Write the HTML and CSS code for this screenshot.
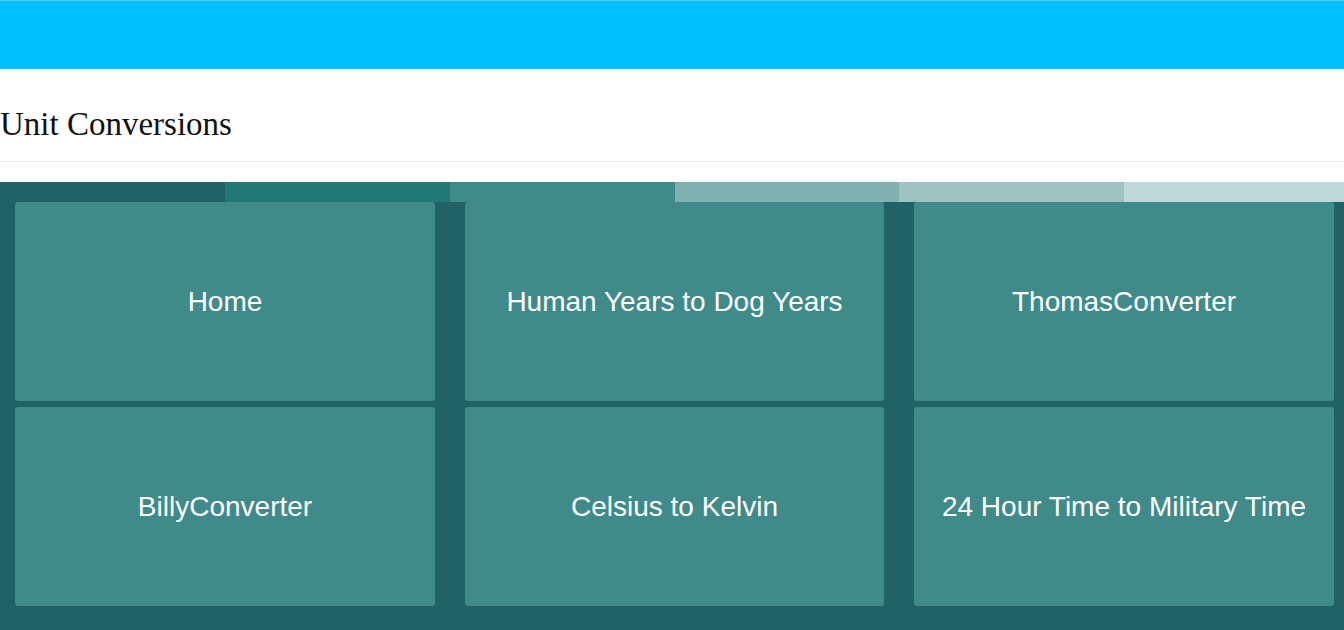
FILE: index.html
```html
<!DOCTYPE html>
<html lang="en">
<head>
<meta charset="utf-8">
<title>Unit Conversions</title>
<link rel="stylesheet" href="styles.css">
</head>
<body>
<div class="topbar"></div>
<header class="page-header">
  <h1 class="title">Unit Conversions</h1>
</header>
<main class="board">
  <div class="stripes">
    <span class="stripe s1"></span>
    <span class="stripe s2"></span>
    <span class="stripe s3"></span>
    <span class="stripe s4"></span>
    <span class="stripe s5"></span>
    <span class="stripe s6"></span>
  </div>
  <nav class="tiles">
    <a class="tile" href="#">Home</a>
    <a class="tile" href="#">Human Years to Dog Years</a>
    <a class="tile" href="#">ThomasConverter</a>
    <a class="tile" href="#">BillyConverter</a>
    <a class="tile" href="#">Celsius to Kelvin</a>
    <a class="tile" href="#">24 Hour Time to Military Time</a>
  </nav>
</main>
</body>
</html>
```

FILE: styles.css
```css
html, body {
  margin: 0;
  padding: 0;
  height: 100%;
}
body {
  background: #216266;
  font-family: "Liberation Sans", Arial, sans-serif;
  display: flex;
  flex-direction: column;
  min-height: 630px;
}
.topbar {
  height: 68px;
  background: #00bfff;
  border-top: 1px solid #5ec8ec;
  flex: none;
}
.page-header {
  background: #fff;
  height: 113px;
  flex: none;
  display: flex;
  flex-direction: column;
}
.title {
  margin: 0;
  height: 93px;
  box-sizing: border-box;
  padding-top: 35px;
  border-bottom: 1px solid #ececec;
  font-family: "Liberation Serif", Georgia, serif;
  font-weight: normal;
  font-size: 33px;
  line-height: 40px;
  color: #111;
}
.board {
  flex: 1;
  background: #216266;
}
.stripes {
  display: flex;
  height: 20px;
}
.stripe {
  flex: none;
  width: 16.73%;
}
.stripe.s6 { flex: 1; }
.s1 { background: #216266; }
.s2 { background: #227877; }
.s3 { background: #408a8a; }
.s4 { background: #80b0b0; }
.s5 { background: #9fc3c3; }
.s6 { background: #bfd8d8; }
.tiles {
  display: grid;
  grid-template-columns: 420px 419px 420px;
  grid-auto-rows: 199px;
  column-gap: 30px;
  row-gap: 6px;
  padding: 0 0 0 15px;
}
.tile {
  background: #408a8a;
  border-radius: 3px;
  color: #fff;
  text-decoration: none;
  font-size: 28px;
  display: flex;
  align-items: center;
  justify-content: center;
  text-align: center;
}
```
